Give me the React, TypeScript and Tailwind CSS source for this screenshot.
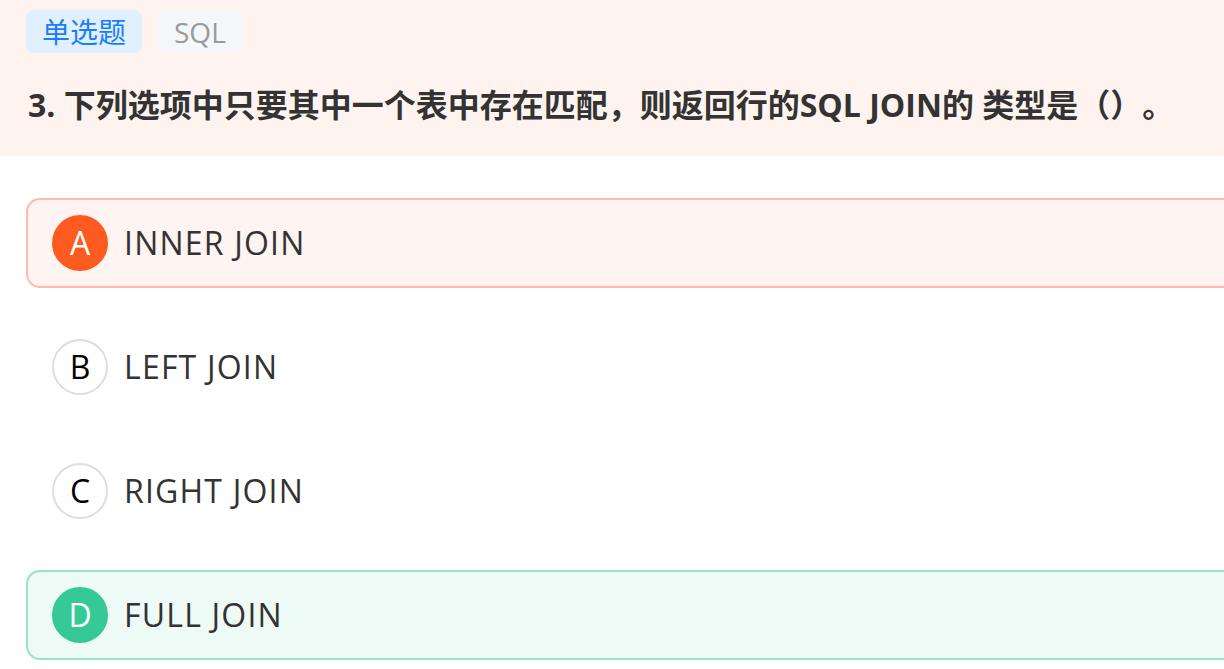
const font = { fontFamily: '"Open Sans", "Noto Sans CJK SC", sans-serif' };
const cjk = { fontFamily: '"Noto Sans CJK SC", sans-serif' };

type Opt = { key: string; text: string; state: "wrong" | "right" | "none" };

const options: Opt[] = [
  { key: "A", text: "INNER JOIN", state: "wrong" },
  { key: "B", text: "LEFT JOIN", state: "none" },
  { key: "C", text: "RIGHT JOIN", state: "none" },
  { key: "D", text: "FULL JOIN", state: "right" },
];

const boxClass = {
  wrong: "border-[#ffbba6] bg-[#fff4f1]",
  right: "border-[#96e3c8] bg-[#edfaf6]",
  none: "border-transparent bg-white",
};

const circleClass = {
  wrong: "bg-[#ff5a1f] text-white border-[#ff5a1f]",
  right: "bg-[#34c997] text-white border-[#34c997]",
  none: "bg-white text-black border-[#dddddd]",
};

export default function App() {
  return (
    <div className="w-[1224px] h-[669px] overflow-hidden bg-white text-[#333]" style={font}>
      <header className="bg-[#fff3ef] px-[26px] pt-[10px] pb-[27px]">
        <div className="flex gap-[16px]">
          <span className="h-[43px] px-[16px] flex items-center rounded-[8px] bg-[#e1f0ff] text-[#1a7dff] text-[28px]">
            单选题
          </span>
          <span className="h-[43px] px-[16px] flex items-center rounded-[8px] bg-[#f5f6f8] text-[#9a9a9a] text-[28px]">
            SQL
          </span>
        </div>
        <h1 className="mt-[26px] pl-[2px] text-[32px] leading-[48px] font-bold text-[#333] whitespace-nowrap [text-spacing-trim:space-all]">
          3. 下列选项中只要其中一个表中存在匹配，则返回行的SQL JOIN的 类型是<span style={cjk}>（）。</span>
        </h1>
      </header>
      <div className="pt-[42px] pl-[26px] -mr-[40px] flex flex-col gap-[34px]">
        {options.map((o) => (
          <div
            key={o.key}
            className={`h-[90px] flex items-center gap-[16px] pl-[24px] rounded-[14px] border-2 ${boxClass[o.state]}`}
          >
            <span
              className={`w-[56px] h-[56px] rounded-full border-2 flex items-center justify-center text-[32px] ${circleClass[o.state]}`}
            >
              {o.key}
            </span>
            <span className="text-[32px] tracking-[1.2px] text-[#333]">{o.text}</span>
          </div>
        ))}
      </div>
    </div>
  );
}
